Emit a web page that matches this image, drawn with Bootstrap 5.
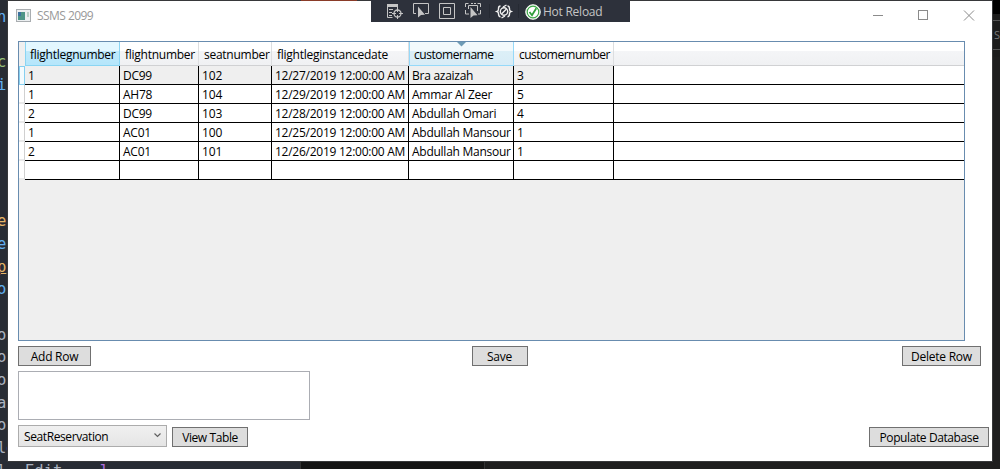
<!DOCTYPE html>
<html lang="en">
<head>
<meta charset="utf-8">
<meta name="viewport" content="width=device-width, initial-scale=1">
<title>SSMS 2099</title>
<link href="https://cdn.jsdelivr.net/npm/bootstrap@5.3.0/dist/css/bootstrap.min.css" rel="stylesheet">
<style>
body{width:1000px;height:469px;background:#1e1e1e;font:12px/16px "Open Sans","Noto Sans",sans-serif;color:#000}
.editor{left:0;top:0;width:301px;height:469px;background:#282c34;border-right:1px solid #333;color:#abb2bf;font:15.5px/22.7px "DejaVu Sans Mono",monospace;white-space:pre}
.code-lines{margin-top:6px;margin-left:-3px}
.code-lines div{height:22.7px}
.c-b{color:#61afef}.c-g{color:#98c379}.c-o{color:#e5b567}.c-p{color:#b06fe0}
.rust{left:301px;top:0;width:56px;height:1px;background:#8a3b28}
.side{left:992px;top:0;width:8px;height:57px;background:#1c1c1c;border-top:14px solid #000}
.side-tab{height:30px;margin-top:6px;border-top:1px solid #555;border-bottom:1px solid #555;color:#777;font-size:11px;line-height:28px;padding-left:2px}
.low{left:301px;top:462px;width:184px;height:7px;background:#151515;border-right:1px solid #333}
.win{left:7px;top:0;width:986px;height:462px;border:1px solid #37383a;background:#fff}
.title-row{height:40px;padding-left:8px}
.title-name{color:#999;margin:7px 0 0 6px;line-height:16px;letter-spacing:-.55px}
.app-icon{margin-top:8px}
.tools{left:363px;top:-1px;width:259px;height:22px;background:#2d313b;color:#c5c5c5}
.tools span{margin:4px 0 0 1px;line-height:16px;letter-spacing:-.25px}
.grid-box{margin-left:10px;width:947px;height:300px;border:1px solid #688caf;background:#efefef}
.dg{table-layout:fixed;border-collapse:separate;border-spacing:0;width:945px;letter-spacing:-.26px}
.dg th{height:24px;padding:3px 0 0 5px;font-weight:400;background:linear-gradient(#fff 0,#fff 40%,#f4f5f7 41%,#f0f1f3);border-right:1px solid #dcdee0;border-bottom:1px solid #d0d1d3;white-space:nowrap;line-height:16px}
.dg th.corner{background:#efefef;border:0;padding:0}
.dg th.hot{background:linear-gradient(#e3f7ff 0,#e3f7ff 40%,#bfe9fb 41%,#b5e6fb);border:1px solid #8ad5f3;border-top:0;padding-left:4px}
.dg th.sorted{background:linear-gradient(#f2f9fc 0,#f2f9fc 40%,#dceff7 41%,#d8ecf6);border:1px solid #96d9f9;border-top:0;padding-left:4px;letter-spacing:-.45px}
.dg th:last-child{border-right:0}
.dg th:nth-child(7){letter-spacing:-.5px}
.dg td{height:19px;padding:1px 0 0 3px;border-bottom:1px solid #000;border-right:1px solid #000;background:#fff;white-space:nowrap;line-height:16px}
.dg td:last-child{border-right:0}
.dg td:nth-child(4){letter-spacing:-.1px}
.dg td:nth-child(7){letter-spacing:-.32px}
.dg td.rh{border:0;border-right:1px solid #d0d0d0;border-bottom:2px solid #eaeaea;padding:0}
.dg tr.cur td:not(:last-child){background:#efefef}
.dg tr.cur td.rh{background:#f4fbfe;border:1px solid #85cff0}
.sort{left:50%;top:0;margin-left:-5px;display:block}
.wbtn{height:20px;border:1px solid #707070;background:#ddd;padding:1px 0 0;font-size:12px;line-height:16px;border-radius:0;color:#000;text-align:center;letter-spacing:-.25px}
.wbtn.tight{letter-spacing:-.4px}
.w-add{width:73px}.w-save{width:56px;margin-left:6px}.w-del{width:79px}.w-view{width:76px;margin-left:5px}.w-pop{width:120px}
.title-name span,.dg span,.pick span,.tools span,.wbtn span{display:inline-block;white-space:nowrap}
.lower{margin:5px 3px 0 10px}
.top-row{margin-right:8px}
.box{width:292px;height:49px;border:1px solid #abadb3;resize:none;margin:5px 0;display:block;border-radius:0}
.pick{width:149px;height:22px;border:1px solid #acacac;background:linear-gradient(#f0f0f0,#e5e5e5);padding:1px 5px 0;letter-spacing:-.4px}
.pick svg{margin-top:-3px}
</style>
</head>
<body class="position-relative overflow-hidden m-0">
<div class="editor position-absolute overflow-hidden"><div class="code-lines"><div class="c-b">n</div><div> </div><div class="c-g">c</div><div class="c-b">i</div><div> </div><div class="c-p"> '</div><div> </div><div> </div><div> </div><div class="c-o">e"</div><div class="c-b">e</div><div class="c-o text-decoration-underline">p</div><div class="c-b">o</div><div class="c-g"> l</div><div>or</div><div>or</div><div>or</div><div>al</div><div>ol</div><div>l<span class="c-b">e</span></div><div>l. Edit    <span class="c-p">l</span></div></div></div>
<div class="side position-absolute overflow-hidden"><div class="side-tab">S</div></div>
<div class="low position-absolute"></div>
<main class="win position-absolute">
  <header class="title-row d-flex align-items-start">
    <svg class="app-icon" width="15" height="13" viewBox="0 0 15 13"><rect x=".5" y=".5" width="14" height="12" fill="#eceff1" stroke="#a9adb0"/><path d="M2 3h7v8H2z" fill="#4d9587"/><path d="M2 3h3v4H2z" fill="#3c729e"/><path d="M11 3h2v5h-2z" fill="#b9cfc6"/></svg>
    <div class="title-name"><span>SSMS 2099</span></div>
    <svg class="ms-auto" width="120" height="30" fill="none" stroke="#8b8b8b" shape-rendering="crispEdges"><path d="M1 14.500h10M46.500 9.500h9v9h-9z"/><path d="M92 9.500l10 10M102 9.500l-10 10" shape-rendering="auto"/></svg>
  </header>
  <div class="tools position-absolute d-flex align-items-start">
    <svg width="171" height="22" viewBox="0 0 171 22" fill="none" stroke="#c5c5c5">
      <path d="M16 4h11v3H16z" fill="#c5c5c5" stroke="none"/><path d="M16.500 5v12.500h5M26.500 6v3M18 9.500h4M18 12.500h3M18 15.500h3"/><circle cx="26.500" cy="13.500" r="3.500" stroke-width="1.300"/><path d="M26.500 8v4M26.500 15v4M21 13.500h4M28 13.500h4"/>
      <path d="M45 13.500h-2.500v-10h15v10H54"/><path d="M47 6.500v11l3-2.500 4-.2z" fill="#c5c5c5" stroke="none"/>
      <path d="M68.500 3.500h15v15h-15zM72.500 7.500h7v7h-7z"/>
      <path d="M97.500 3.500h-3V7M94.500 10v4H98M102 3.500h-2M105 3.500h-2M106.500 3.500h3V7M109.500 10v4H107M97.500 9V5.500h9V11"/><path d="M99.500 7v11l3-2.600 4-.2z" fill="#c5c5c5" stroke="none"/>
      <path d="M118.500 4v14M147.500 4v14" stroke="#262a33"/>
      <g stroke="#f0f0f0" stroke-width="1.400"><path d="M129.500 6q-2 0-2 2.500v.8q0 1.700-1.500 2.200 1.500.5 1.500 2.200 0 3 2 3M136.500 6q2 0 2 2.500v.8q0 1.700 1.500 2.200-1.500.5-1.500 2.200 0 3-2 3"/><circle cx="133" cy="11.500" r="3.700"/><path d="M130.500 14l5-5M135.500 5l-3.500 2M130.500 18l3.500-2"/></g>
      <circle cx="162" cy="12" r="7.300" fill="#fff" stroke="#eef5ee"/><circle cx="162" cy="12" r="5.800" stroke="#3ba745" stroke-width="1.200"/><path d="M158.500 12l2.500 3.200 4.300-7" stroke="#2f9e3a" stroke-width="1.800"/>
    </svg>
    <span>Hot Reload</span>
  </div>
  <div class="grid-box">
    <table class="dg">
      <colgroup><col style="width:6px"><col style="width:95px"><col style="width:79px"><col style="width:73px"><col style="width:137px"><col style="width:105px"><col style="width:100px"><col></colgroup>
      <thead><tr><th class="corner"></th><th class="hot"><span>flightlegnumber</span></th><th><span>flightnumber</span></th><th><span>seatnumber</span></th><th><span>flightleginstancedate</span></th><th class="sorted position-relative"><svg class="sort position-absolute" width="9" height="5"><path d="M0 0h9L4.500 4.500z" fill="#6e9bb5"/></svg><span>customername</span></th><th><span>customernumber</span></th><th></th></tr></thead>
      <tbody>
      <tr class="cur"><td class="rh"></td><td><span>1</span></td><td><span>DC99</span></td><td><span>102</span></td><td><span>12/27/2019 12:00:00 AM</span></td><td><span>Bra azaizah</span></td><td><span>3</span></td><td></td></tr>
      <tr><td class="rh"></td><td><span>1</span></td><td><span>AH78</span></td><td><span>104</span></td><td><span>12/29/2019 12:00:00 AM</span></td><td><span>Ammar Al Zeer</span></td><td><span>5</span></td><td></td></tr>
      <tr><td class="rh"></td><td><span>2</span></td><td><span>DC99</span></td><td><span>103</span></td><td><span>12/28/2019 12:00:00 AM</span></td><td><span>Abdullah Omari</span></td><td><span>4</span></td><td></td></tr>
      <tr><td class="rh"></td><td><span>1</span></td><td><span>AC01</span></td><td><span>100</span></td><td><span>12/25/2019 12:00:00 AM</span></td><td><span>Abdullah Mansour</span></td><td><span>1</span></td><td></td></tr>
      <tr><td class="rh"></td><td><span>2</span></td><td><span>AC01</span></td><td><span>101</span></td><td><span>12/26/2019 12:00:00 AM</span></td><td><span>Abdullah Mansour</span></td><td><span>1</span></td><td></td></tr>
      <tr><td class="rh"></td><td></td><td></td><td></td><td></td><td></td><td></td><td></td></tr>
      </tbody>
    </table>
  </div>
  <div class="lower">
    <div class="top-row d-flex justify-content-between"><button class="wbtn w-add"><span>Add Row</span></button><button class="wbtn w-save"><span>Save</span></button><button class="wbtn w-del"><span>Delete Row</span></button></div>
    <textarea class="box"></textarea>
    <div class="d-flex align-items-end"><div class="pick d-flex align-items-center justify-content-between"><span>SeatReservation</span><svg width="7" height="5" fill="none" stroke="#606060" stroke-width="1.200"><path d="M.5.500l3 3 3-3"/></svg></div><button class="wbtn tight w-view"><span>View Table</span></button><button class="wbtn tight w-pop ms-auto"><span>Populate Database</span></button></div>
  </div>
</main>
<div class="rust position-absolute"></div>
<script src="https://cdn.jsdelivr.net/npm/bootstrap@5.3.0/dist/js/bootstrap.bundle.min.js"></script>
</body>
</html>
